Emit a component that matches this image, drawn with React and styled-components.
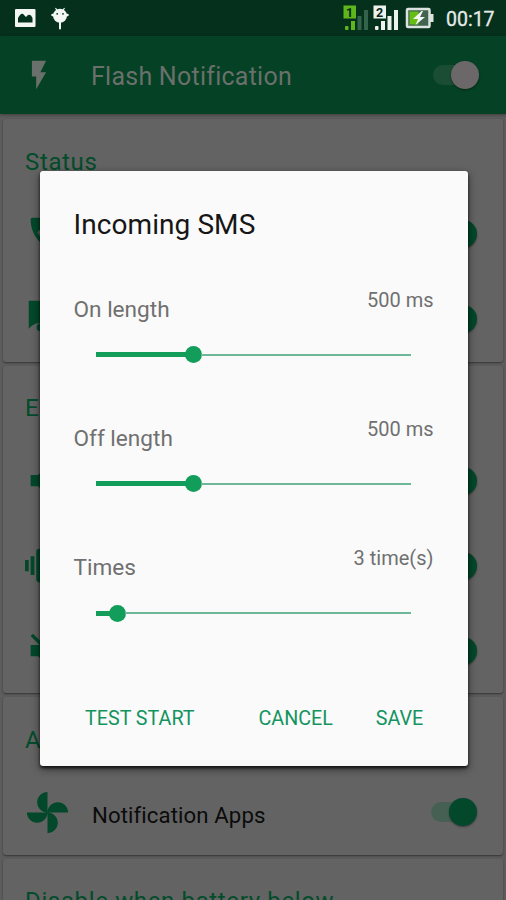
import React from 'react';
import styled, { createGlobalStyle } from 'styled-components';
import { MdFlashOn, MdPhone, MdVolumeUp, MdVolumeOff, MdVibration } from 'react-icons/md';

const GlobalStyle = createGlobalStyle`
  * { box-sizing: border-box; }
  body { margin: 0; overflow: hidden; font-family: Roboto, sans-serif; }
`;

const Screen = styled.div`
  position: relative;
  width: 506px;
  height: 900px;
  overflow: hidden;
  background: #5d5d5d;
`;

const StatusBar = styled.header`
  display: flex;
  align-items: center;
  justify-content: space-between;
  height: 36px;
  padding: 0 11px 0 14px;
  background: #04301c;
`;

const StatusGroup = styled.div`
  display: flex;
  align-items: center;
  gap: ${(p) => p.$gap}px;
`;

const BatterySlot = styled.span`
  display: flex;
  margin-left: 2px;
`;

const Clock = styled.span`
  width: 49px;
  margin-left: 8px;
  font-size: 19.5px;
  line-height: 34px;
  padding-top: 3px;
  color: #e6ebe8;
  -webkit-text-stroke: 0.3px #e6ebe8;
  white-space: nowrap;
`;

const AppBar = styled.div`
  display: flex;
  align-items: center;
  height: 78px;
  padding: 0 27px 0 22px;
  background: #054125;
  color: #6a706b;
  box-shadow: 0 1px 3px rgba(0, 0, 0, 0.35);
`;

const AppTitle = styled.h1`
  flex: 1;
  margin: 0 0 0 35px;
  padding-top: 3px;
  font-size: 25px;
  font-weight: 400;
  letter-spacing: 0.25px;
  line-height: 30px;
`;

const Cards = styled.main`
  display: flex;
  flex-direction: column;
  gap: 4px;
  padding: 5px 3px 0;
`;

const Card = styled.section`
  padding: 0 22px;
  border-radius: 3px;
  background: #636363;
  box-shadow: 0 1px 2px rgba(0, 0, 0, 0.45);
`;

const CardTitle = styled.h2`
  height: 72.5px;
  margin: 0;
  padding-top: 27.5px;
  font-size: 24px;
  font-weight: 400;
  letter-spacing: 0.64px;
  line-height: 30px;
  color: #034c2b;
  white-space: nowrap;
`;

const Row = styled.div`
  display: flex;
  align-items: center;
  height: 85px;
  color: #03482a;
`;

const RowLabel = styled.span`
  flex: 1;
  margin-left: 22px;
  padding-top: 5px;
  font-size: 22.2px;
  letter-spacing: 0.1px;
  color: #0b0b0b;
`;

const Toggle = styled.span`
  display: flex;
  align-items: center;
  justify-content: flex-end;
  width: 46px;
  height: 20px;
  margin-right: ${(p) => (p.$light ? 0 : 4)}px;
  border-radius: 10px;
  background: linear-gradient(${(p) => (p.$light ? '#1b4d34, #1b4d34' : '#466153, #466153')}) left / 40px 20px no-repeat;

  &::after {
    content: '';
    width: 28px;
    height: 28px;
    flex: none;
    border-radius: 50%;
    background: ${(p) => (p.$light ? '#6c6869' : '#03482a')};
    box-shadow: 0 1px 2px rgba(0, 0, 0, 0.4);
  }
`;

const Dialog = styled.div`
  position: absolute;
  left: 39.5px;
  top: 170.5px;
  width: 428px;
  height: 595.5px;
  padding: 37px 34px 0;
  border-radius: 3px;
  background: #fafafa;
  box-shadow: 0 2px 3px rgba(0, 0, 0, 0.7), 0 3px 9px rgba(0, 0, 0, 0.5);
`;

const DialogTitle = styled.h3`
  height: 79px;
  margin: 0;
  font-size: 28px;
  font-weight: 400;
  letter-spacing: 0.08px;
  line-height: 34px;
  color: #161616;
`;

const Setting = styled.div`
  height: 129.3px;
`;

const SettingHead = styled.div`
  display: flex;
  justify-content: space-between;
  align-items: flex-start;
  height: 57px;
  color: #707070;
`;

const SettingName = styled.span`
  padding-top: 8px;
  font-size: 22.6px;
  line-height: 29px;
`;

const SettingValue = styled.span`
  font-size: 20px;
  line-height: 26px;
`;

const Slider = styled.div`
  display: flex;
  align-items: center;
  height: 22px;
  padding: 0 23px 0 22px;
`;

const Filled = styled.span`
  width: ${(p) => p.$width}px;
  height: 5px;
  background: #129d5b;
`;

const Thumb = styled.span`
  width: 17px;
  height: 17px;
  margin: 0 -1px;
  border-radius: 50%;
  background: #129d5b;
`;

const Track = styled.span`
  flex: 1;
  height: 2px;
  background: #6db898;
`;

const Actions = styled.div`
  display: flex;
  align-items: center;
  height: 30px;
  margin-top: 30px;
  padding: 0 10px 0 11px;
`;

const ActionButton = styled.button`
  margin-left: ${(p) => p.$before}px;
  padding: 0;
  border: 0;
  background: none;
  color: #129460;
  font: 400 19.7px/30px Roboto, sans-serif;
  white-space: nowrap;
`;

const PictureIcon = () => (
  <svg width="22" height="20" viewBox="0 0 22 20">
    <rect x="1" y="1" width="20.500" height="18" rx="1" fill="#f4f6f4" />
    <path d="M4 14.500V10q1-2 3-4 2-1 3 1l2 2 2-2q3-1 4.500 3v4.500z" fill="#04301c" />
  </svg>
);

const DroidIcon = () => (
  <svg width="18" height="24" viewBox="0 0 18 24">
    <path d="M4.500 2l2 3M13.500 2l-2 3" stroke="#f4f6f4" strokeWidth="1.200" />
    <path d="M1.500 9h15" stroke="#f4f6f4" strokeWidth="2.500" strokeLinecap="round" />
    <circle cx="9" cy="9.700" r="7" fill="#f4f6f4" />
    <circle cx="6.200" cy="7.800" r="0.900" fill="#04301c" />
    <circle cx="12" cy="7.800" r="0.900" fill="#04301c" />
    <path d="M9 15v7.500" stroke="#f4f6f4" strokeWidth="2" strokeLinecap="round" />
  </svg>
);

const SignalIcon = ({ label, color, idle }) => (
  <svg width="26" height="26" viewBox="0 0 26 26">
    <rect x="0.500" y="0.500" width="12.500" height="13" fill={color} />
    <text x="6.700" y="11.500" textAnchor="middle" fontSize="12.500" fontWeight="700" fontFamily="Roboto" fill="#062614">{label}</text>
    <rect x="2" y="21" width="3.500" height="4" rx="1" fill={color} />
    <rect x="8" y="16" width="4" height="9" fill={color} />
    <rect x="14.500" y="11" width="4" height="14" fill={idle} />
    <rect x="21" y="5" width="4" height="20" fill={idle} />
  </svg>
);

const BatteryIcon = () => (
  <svg width="29" height="22" viewBox="0 0 29 22">
    <rect x="2" y="2" width="22.500" height="18" rx="1" fill="#41634f" stroke="#dce2dd" strokeWidth="2.500" />
    <rect x="25" y="7" width="3.500" height="8" fill="#dce2dd" />
    <rect x="4.500" y="4.500" width="9" height="13" fill="#66bd16" />
    <path d="M16.500 4L8 12h5l-2.500 6L20 10h-5l3-6z" fill="#f4f6f4" />
  </svg>
);

const MessageIcon = () => (
  <svg width="45" height="45" viewBox="0 0 24 24" fill="currentColor">
    <path d="M2 2h20v12H8.500Q4.500 13.500 2 17z" />
    <circle cx="8.200" cy="16.300" r="2" />
  </svg>
);

const PinwheelIcon = () => (
  <svg width="45" height="45" viewBox="0 0 24 24" fill="currentColor">
    <path d="M12 12c0-3 2.500-5.500 5.500-5.500S23 9 23 12H12zm0 0c0 3-2.500 5.500-5.500 5.500S1 15 1 12h11zm0 0c-3 0-5.500-2.500-5.500-5.500S9 1 12 1v11zm0 0c3 0 5.500 2.500 5.500 5.500S15 23 12 23V12z" />
  </svg>
);

const cards = [
  { title: 'Status', rows: [{ Icon: MdPhone, label: '' }, { Icon: MessageIcon, label: '' }] },
  { title: 'Enable', rows: [{ Icon: MdVolumeUp, label: '' }, { Icon: MdVibration, label: '' }, { Icon: MdVolumeOff, label: '' }] },
  { title: 'Apps', rows: [{ Icon: PinwheelIcon, label: 'Notification Apps' }] },
  { title: 'Disable when battery below', rows: [] },
];

const settings = [
  { name: 'On length', value: '500 ms', filled: 90.5 },
  { name: 'Off length', value: '500 ms', filled: 90.5 },
  { name: 'Times', value: '3 time(s)', filled: 14.5 },
];

export default function App() {
  return (
    <Screen>
      <GlobalStyle />
      <StatusBar>
        <StatusGroup $gap={15}>
          <PictureIcon />
          <DroidIcon />
        </StatusGroup>
        <StatusGroup $gap={4}>
          <SignalIcon label="1" color="#5eb81c" idle="#34634b" />
          <SignalIcon label="2" color="#eef2ef" idle="#eef2ef" />
          <BatterySlot>
            <BatteryIcon />
          </BatterySlot>
          <Clock>00:17</Clock>
        </StatusGroup>
      </StatusBar>
      <AppBar>
        <MdFlashOn size={34} />
        <AppTitle>Flash Notification</AppTitle>
        <Toggle $light />
      </AppBar>
      <Cards>
        {cards.map((card) => (
          <Card key={card.title}>
            <CardTitle>{card.title}</CardTitle>
            {card.rows.map(({ Icon, label }, i) => (
              <Row key={i}>
                <Icon size={45} />
                <RowLabel>{label}</RowLabel>
                <Toggle />
              </Row>
            ))}
          </Card>
        ))}
      </Cards>
      <Dialog role="dialog">
        <DialogTitle>Incoming SMS</DialogTitle>
        {settings.map((s) => (
          <Setting key={s.name}>
            <SettingHead>
              <SettingName>{s.name}</SettingName>
              <SettingValue>{s.value}</SettingValue>
            </SettingHead>
            <Slider>
              <Filled $width={s.filled} />
              <Thumb />
              <Track />
            </Slider>
          </Setting>
        ))}
        <Actions>
          <ActionButton $before={0.5}>TEST START</ActionButton>
          <ActionButton $before={64}>CANCEL</ActionButton>
          <ActionButton $before={43}>SAVE</ActionButton>
        </Actions>
      </Dialog>
    </Screen>
  );
}
